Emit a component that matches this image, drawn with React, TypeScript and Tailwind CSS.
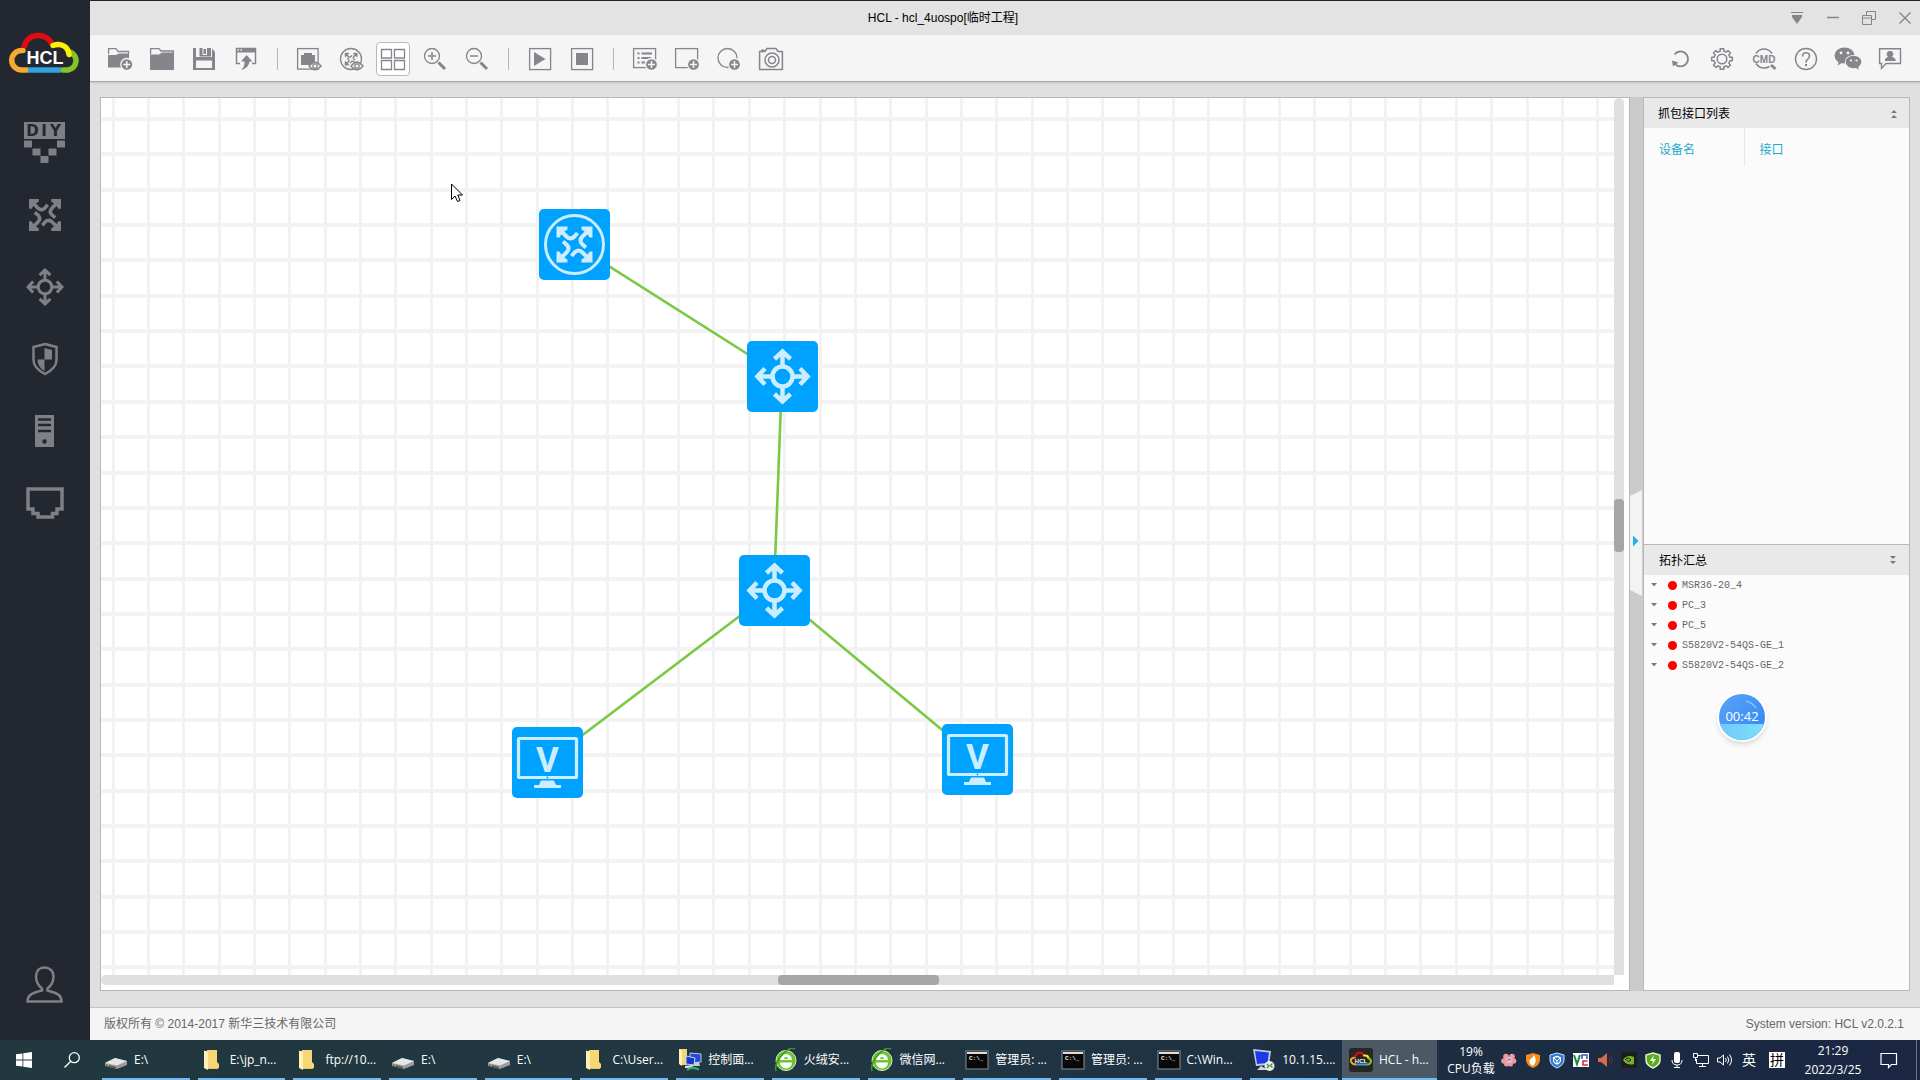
import { useState, type ReactNode } from 'react';
import clsx from 'clsx';

const GRID_STEP = 35.35;

type NodeKind = 'router' | 'switch' | 'pc';

interface Device {
  id: string;
  name: string;
  kind: NodeKind;
  x: number;
  y: number;
}

// Coordinates are relative to the top left corner of the canvas
const devices: Device[] = [
  { id: 'r4', name: 'MSR36-20_4', kind: 'router', x: 438, y: 111 },
  { id: 'pc3', name: 'PC_3', kind: 'pc', x: 411, y: 629 },
  { id: 'pc5', name: 'PC_5', kind: 'pc', x: 841, y: 626 },
  { id: 's1', name: 'S5820V2-54QS-GE_1', kind: 'switch', x: 646, y: 243 },
  { id: 's2', name: 'S5820V2-54QS-GE_2', kind: 'switch', x: 638, y: 457 },
];

const links = [
  ['r4', 's1'],
  ['s1', 's2'],
  ['s2', 'pc3'],
  ['s2', 'pc5'],
];

const center = (id: string) => {
  const d = devices.find((item) => item.id === id)!;
  return { x: d.x + 35, y: d.y + 35 };
};

/* ---------- shared glyphs ---------- */

function RouterArrows() {
  return (
    <>
      {[0, 90, 180, 270].map((angle) => (
        <g key={angle} transform={`rotate(${angle} 18 18)`}>
          <path d="M0 0H11V3L8.500 4.500 4.500 8.500 3 11H0Z" fill="currentColor" />
          <path d="M4 4 10 10Q14 14 18 10L21 6.500" fill="none" stroke="currentColor" strokeWidth="4" />
        </g>
      ))}
    </>
  );
}

function SwitchArrows() {
  return (
    <g fill="none" stroke="currentColor" strokeWidth="4.5">
      <circle cx="28" cy="28" r="10" />
      {[0, 90, 180, 270].map((angle) => (
        <path key={angle} d="M28 18V3M20 10.500 28 3 36 10.500" transform={`rotate(${angle} 28 28)`} />
      ))}
    </g>
  );
}

function NodeIcon({ kind }: { kind: NodeKind }) {
  return (
    <svg viewBox="0 0 71 71" className="size-full">
      {kind === 'router' && (
        <>
          <circle cx="35.5" cy="35.5" r="29" fill="none" stroke="currentColor" strokeWidth="3" />
          <g transform="translate(17.5 17.5)">
            <RouterArrows />
          </g>
        </>
      )}
      {kind === 'switch' && (
        <g transform="translate(7.5 7.5)">
          <SwitchArrows />
        </g>
      )}
      {kind === 'pc' && (
        <>
          <rect x="6.500" y="11.500" width="58" height="39" rx="1" fill="none" stroke="currentColor" strokeWidth="3.200" />
          <text
            x="35.500"
            y="44.500"
            textAnchor="middle"
            fontFamily="'Liberation Sans Narrow', Roboto, sans-serif"
            fontWeight="700"
            fontSize="35"
            fill="currentColor"
          >
            V
          </text>
          <circle cx="35.500" cy="50.500" r="0.900" fill="#00a2ff" />
          <path d="M29 53.500H42L44 58H49V61H22V58H27Z" fill="currentColor" />
        </>
      )}
    </svg>
  );
}

function Logo() {
  return (
    <svg viewBox="0 0 74 44" className="h-11 w-[74px]" fill="none" strokeWidth="5.5" strokeLinecap="round">
      <path d="M63 21.500A10 9.500 0 0 1 60 39H55" stroke="#86c127" />
      <path d="M15 19.500H13.500A9.750 9.750 0 0 0 13.500 39H19" stroke="#f5a92e" />
      <path d="M20 39H53" stroke="#2ea3dc" strokeLinecap="butt" />
      <path d="M16 17C18 1 39 1 44 13" stroke="#e30b13" strokeLinecap="butt" />
      <path d="M45 14.500C53 12 60 15 61 23.500" stroke="#fdf000" />
      <text x="37" y="33" textAnchor="middle" fontFamily="'Liberation Sans', Arial, sans-serif" fontWeight="700" fontSize="18" fill="#fff">
        HCL
      </text>
    </svg>
  );
}

/* ---------- sidebar icons ---------- */

const DiyIcon = () => (
  <svg viewBox="0 0 42 42" className="size-[42px]" fill="currentColor">
    <rect y="0" width="41" height="17" />
    <g textAnchor="middle" fontFamily="'DejaVu Sans', sans-serif" fontWeight="700" fontSize="15" fill="#23272f">
      <text x="8.500" y="14">
        D
      </text>
      <text x="20" y="14">
        I
      </text>
      <text x="31.500" y="14">
        Y
      </text>
    </g>
    <path d="M0 18.500h8v7H0zM33 18.500h8v7h-8zM8.500 26.500h8v7h-8zM24.500 26.500h8v7h-8zM16.500 34h8v7h-8z" />
  </svg>
);

const ShieldIcon = () => (
  <svg viewBox="0 0 28 36" className="h-9 w-7">
    <path d="M14 3 25.500 6V19Q25.500 27 14 33 2.500 27 2.500 19V6Z" fill="none" stroke="currentColor" strokeWidth="2.500" />
    <path d="M13.500 7 21 9V18.500H13.500V30Q6.500 26 6.500 18.500H13.500Z" fill="currentColor" />
  </svg>
);

const ServerIcon = () => (
  <svg viewBox="0 0 20 34" className="h-[34px] w-5">
    <path d="M0 1H19V33H0Z" fill="currentColor" />
    <path d="M3 5.500H16M3 11H16M3 17H16" stroke="#23272f" strokeWidth="2.500" />
    <circle cx="9.500" cy="27.500" r="2.200" fill="#23272f" />
  </svg>
);

const PortIcon = () => (
  <svg viewBox="0 0 40 34" className="h-[34px] w-10">
    <path d="M3 3H37V23H32V27.500H27.500V31H13V27.500H8V23H3Z" fill="none" stroke="currentColor" strokeWidth="3.500" />
  </svg>
);

const UserIcon = () => (
  <svg viewBox="0 0 38 38" className="size-[38px]" fill="none" stroke="currentColor" strokeWidth="2.500">
    <path d="M16 25.500V23.500C11.500 20 10 16 10 11.500 10 6 13.500 2.500 18.500 2.500S27.500 6 27.500 11.500C27.500 16 26 20 21.500 23.500V25.500C29 27.500 35.500 29 35.500 36.500H1.500C1.500 29 8.500 27.500 16 25.500Z" />
  </svg>
);

const sidebarItems: { label: string; icon: ReactNode }[] = [
  { label: 'DIY', icon: <DiyIcon /> },
  {
    label: '路由器',
    icon: (
      <svg viewBox="0 0 36 36" className="size-8">
        <RouterArrows />
      </svg>
    ),
  },
  {
    label: '交换机',
    icon: (
      <svg viewBox="0 0 56 56" className="size-[38px]">
        <SwitchArrows />
      </svg>
    ),
  },
  { label: '防火墙', icon: <ShieldIcon /> },
  { label: '终端', icon: <ServerIcon /> },
  { label: '连线', icon: <PortIcon /> },
];

/* ---------- toolbar icons ---------- */

function ToolSvg({ children }: { children: ReactNode }) {
  return (
    <svg viewBox="0 0 28 28" className="size-7" fill="none" stroke="currentColor" strokeWidth="1.300">
      {children}
    </svg>
  );
}

function PlusBadge({ x = 20.5, y = 19.5 }: { x?: number; y?: number }) {
  return (
    <g transform={`translate(${x} ${y})`}>
      <circle r="6" fill="currentColor" stroke="#f5f5f5" />
      <path d="M-3.500 0H3.500M0-3.500V3.500" stroke="#f5f5f5" strokeWidth="1.500" />
    </g>
  );
}

function EyeBadge() {
  return (
    <g transform="translate(20 21)">
      <path d="M-6 0Q0-7.500 6 0 0 7.500-6 0Z" fill="#f5f5f5" />
      <circle r="2.200" />
    </g>
  );
}

function Magnifier({ plus }: { plus?: boolean }) {
  return (
    <ToolSvg>
      <circle cx="11" cy="11" r="7.500" />
      <path d={plus ? 'M7 11H15M11 7V15' : 'M7 11H15'} strokeWidth="1.500" />
      <path d="M17.500 17.500 24 24" strokeWidth="3" />
    </ToolSvg>
  );
}

interface Tool {
  label: string;
  icon: ReactNode;
}

const toolGroups: Tool[][] = [
  [
    {
      label: '新建工程',
      icon: (
        <ToolSvg>
          <path d="M2.600 9V3.600H10L12 6.500H22.500V10" />
          <path d="M2 10H10L13 8.500H23V22.500H2Z" fill="currentColor" stroke="none" />
          <PlusBadge x={20.8} />
        </ToolSvg>
      ),
    },
    {
      label: '打开工程',
      icon: (
        <ToolSvg>
          <path d="M2.600 9V3.600H11L13 6H25.400V9" />
          <path d="M2 9.500H11L14 7.500H26V25H2Z" fill="currentColor" stroke="none" />
        </ToolSvg>
      ),
    },
    {
      label: '保存工程',
      icon: (
        <ToolSvg>
          <path d="M3 3H6V12H22V3.500L25 7V25H3Z" fill="currentColor" stroke="none" />
          <path d="M9.500 3H12.500V10H17V3H21V11.500H9.500Z" fill="currentColor" stroke="none" />
          <path d="M13.500 4H16V9H13.500Z" fill="currentColor" stroke="none" />
          <path d="M6 15.500H22V23H6Z" fill="#f5f5f5" stroke="none" />
        </ToolSvg>
      ),
    },
    {
      label: '导出工程',
      icon: (
        <ToolSvg>
          <path d="M8 18.500H4.500V3.500H23.500V18.500H20" strokeWidth="1.500" />
          <path d="M4 3H24V7.500H4Z" fill="currentColor" stroke="none" />
          <path d="M5.500 5H7M8.500 5H10" stroke="#f5f5f5" />
          <path d="M14.500 10 20.500 16.500H17.500Q17 23 9 25 13 22 12.500 16.500H9Z" fill="currentColor" stroke="none" />
        </ToolSvg>
      ),
    },
  ],
  [
    {
      label: '显示设备名',
      icon: (
        <ToolSvg>
          <rect x="2.600" y="3.600" width="20.500" height="20.500" />
          <path d="M6 10H9V8H17V10H20V20H6Z" fill="currentColor" stroke="none" />
          <EyeBadge />
        </ToolSvg>
      ),
    },
    {
      label: '显示接口名',
      icon: (
        <ToolSvg>
          <circle cx="14" cy="14" r="10.500" />
          <g transform="translate(8 8) scale(.34)">
            <RouterArrows />
          </g>
          <EyeBadge />
        </ToolSvg>
      ),
    },
    {
      label: '显示网格',
      icon: (
        <ToolSvg>
          <path d="M2.500 4.500H12.500V13H2.500ZM15.500 4.500H25.500V13H15.500ZM2.500 15.500H12.500V24.500H2.500ZM15.500 15.500H25.500V24.500H15.500Z" />
        </ToolSvg>
      ),
    },
    { label: '放大', icon: <Magnifier plus /> },
    { label: '缩小', icon: <Magnifier /> },
  ],
  [
    {
      label: '全部启动',
      icon: (
        <ToolSvg>
          <rect x="3.600" y="3.600" width="21" height="21" />
          <path d="M8 7 19.500 14 8 21Z" fill="currentColor" stroke="none" />
        </ToolSvg>
      ),
    },
    {
      label: '全部停止',
      icon: (
        <ToolSvg>
          <rect x="3.600" y="3.600" width="21" height="21" />
          <path d="M8 8H20V20H8Z" fill="currentColor" stroke="none" />
        </ToolSvg>
      ),
    },
  ],
  [
    {
      label: '添加文本',
      icon: (
        <ToolSvg>
          <rect x="2.600" y="3.600" width="22" height="19" />
          <path d="M6.500 8.500H8.500M10.500 8.500H21M6.500 13H8.500M10.500 13H20M6.500 17.500H8.500M10.500 17.500H14" strokeWidth="1.800" />
          <PlusBadge />
        </ToolSvg>
      ),
    },
    {
      label: '添加矩形',
      icon: (
        <ToolSvg>
          <rect x="2.600" y="3.600" width="22" height="19" />
          <PlusBadge />
        </ToolSvg>
      ),
    },
    {
      label: '添加圆形',
      icon: (
        <ToolSvg>
          <circle cx="12.500" cy="13" r="9.500" />
          <PlusBadge x={19.500} />
        </ToolSvg>
      ),
    },
    {
      label: '截图',
      icon: (
        <ToolSvg>
          <path d="M2.600 6.500H8L10 3.600H19L21 6.500H25.400V24.400H2.600Z" strokeWidth="1.500" />
          <path d="M4 5.500H7.500" strokeWidth="2" />
          <circle cx="15" cy="15" r="7" strokeWidth="1.500" />
          <circle cx="15" cy="15" r="3.500" strokeWidth="1.500" />
        </ToolSvg>
      ),
    },
  ],
];

const helpTools: Tool[] = [
  {
    label: '刷新',
    icon: (
      <ToolSvg>
        <path d="M8.500 9.500A7.500 7.500 0 1 1 9 19" strokeWidth="1.800" />
        <path d="M6 15.500 12.500 17.500 7 21.500Z" fill="currentColor" stroke="none" />
      </ToolSvg>
    ),
  },
  {
    label: '设置',
    icon: (
      <ToolSvg>
        <circle cx="14" cy="14" r="4.800" strokeWidth="1.500" />
        {/* one tooth and the rim next to it, eight times round */}
        {[0, 45, 90, 135, 180, 225, 270, 315].map((angle) => (
          <path
            key={angle}
            d="M10.900 6.500 12.200 6.200V3.700H15.800V6.200L17.100 6.500"
            transform={`rotate(${angle} 14 14)`}
            strokeWidth="1.500"
            strokeLinejoin="round"
          />
        ))}
      </ToolSvg>
    ),
  },
  {
    label: '命令行',
    icon: (
      <ToolSvg>
        <path d="M6 8.500Q9 4 14 4T22 8.500M6 18.500Q9 23 14 23 17 23 19.500 21.500" strokeWidth="1.500" />
        <text x="14" y="17.500" textAnchor="middle" fontFamily="'Liberation Sans', Arial, sans-serif" fontWeight="700" fontSize="10" fill="currentColor" stroke="none">
          CMD
        </text>
        <path d="M21 20 25.500 24" strokeWidth="3" />
      </ToolSvg>
    ),
  },
  {
    label: '帮助',
    icon: (
      <ToolSvg>
        <circle cx="14" cy="14" r="10.500" strokeWidth="1.400" />
        <path d="M10.500 11.500C10.500 6.500 17.500 6.500 17.500 11 17.500 14 14 14 14 17.500" strokeWidth="1.600" />
        <circle cx="14" cy="20" r="1.200" fill="currentColor" stroke="none" />
      </ToolSvg>
    ),
  },
  {
    label: '微信',
    icon: (
      <ToolSvg>
        <g stroke="none">
          <ellipse cx="10.500" cy="10.500" rx="10" ry="8" fill="currentColor" />
          <path d="M5 16 3.500 20.500 9.500 17Z" fill="currentColor" />
          <ellipse cx="19.500" cy="17" rx="8.800" ry="7" fill="#f5f5f5" />
          <ellipse cx="19.500" cy="17" rx="7.800" ry="6.200" fill="currentColor" />
          <path d="M21 22 24.500 25 24 20Z" fill="currentColor" />
          <g fill="#f5f5f5">
            <circle cx="7" cy="8" r="1.400" />
            <circle cx="14" cy="8" r="1.400" />
            <circle cx="17" cy="15.500" r="1.100" />
            <circle cx="22.500" cy="15.500" r="1.100" />
          </g>
        </g>
      </ToolSvg>
    ),
  },
  {
    label: '反馈',
    icon: (
      <ToolSvg>
        <path d="M3.600 3.800H24.500V18.500H10L5.500 23.500V18.500H3.600Z" strokeWidth="1.400" />
        <path d="M14 6A3 3 0 0 1 16 11.500L19.500 14V16H9V14L12 11.500A3 3 0 0 1 14 6Z" fill="currentColor" stroke="none" />
      </ToolSvg>
    ),
  },
];

function Toolbar() {
  const [showGrid, setShowGrid] = useState(true);

  return (
    <div role="toolbar" className="flex h-[47px] shrink-0 items-center border-b border-[#a9a9a9] bg-[#f5f5f5] px-[9px] pt-0.5 text-[#85868c] shadow">
      {toolGroups.map((group, i) => (
        <div key={i} className="flex items-center">
          {i > 0 && (
            <span className="flex w-[21px] justify-center">
              <span className="h-[22px] w-px bg-[#b5b5b8]" />
            </span>
          )}
          {group.map((tool) => {
            const isGrid = tool.label === '显示网格';
            return (
              <button
                key={tool.label}
                aria-label={tool.label}
                onClick={isGrid ? () => setShowGrid(!showGrid) : undefined}
                className={clsx(
                  'mx-1 flex size-[34px] items-center justify-center rounded-sm',
                  isGrid && showGrid && 'border border-[#b9b9b9] bg-white'
                )}
              >
                {tool.icon}
              </button>
            );
          })}
        </div>
      ))}
      <div className="ml-auto flex">
        {helpTools.map((tool) => (
          <button key={tool.label} aria-label={tool.label} className="mx-1 flex size-[34px] items-center justify-center">
            {tool.icon}
          </button>
        ))}
      </div>
    </div>
  );
}

function TitleBar() {
  return (
    <header className="flex h-[35px] shrink-0 items-center border-t border-[#23202a] bg-[#e3e3e3] pl-[14px]">
      <h1 className="flex-1 text-center text-xs text-black">HCL - hcl_4uospo[临时工程]</h1>
      <div className="flex gap-1.5 text-[#85868c]">
        <button aria-label="菜单" className="flex h-6 w-[30px] items-center justify-center">
          <svg viewBox="0 0 14 14" className="size-3.5">
            <path d="M1 1.500H13" stroke="currentColor" />
            <path d="M2 4H12V6L7 13 2 6Z" fill="currentColor" />
          </svg>
        </button>
        <button aria-label="最小化" className="flex h-6 w-[30px] items-center justify-center">
          <svg viewBox="0 0 14 14" className="size-3.5">
            <path d="M1 6.500H13" stroke="currentColor" strokeWidth="1.500" />
          </svg>
        </button>
        <button aria-label="还原" className="flex h-6 w-[30px] items-center justify-center">
          <svg viewBox="0 0 14 14" className="size-3.5" fill="none" stroke="currentColor">
            <path d="M4.500 4.500V.5H13.500V8.500H9.500M.5 4.500H9.500V13.500H.5ZM.5 7H9.500" />
          </svg>
        </button>
        <button aria-label="关闭" className="flex h-6 w-[30px] items-center justify-center">
          <svg viewBox="0 0 14 14" className="size-3.5">
            <path d="M1.500 1.500 12.500 12.500M12.500 1.500 1.500 12.500" stroke="currentColor" strokeWidth="1.400" />
          </svg>
        </button>
      </div>
    </header>
  );
}

function Sidebar() {
  return (
    <aside className="flex w-[90px] shrink-0 flex-col items-center bg-[#23272f] pb-[37px] pt-[31px] text-[#7e8085]">
      <Logo />
      <nav className="mt-8 flex flex-col">
        {sidebarItems.map((item) => (
          <button key={item.label} aria-label={item.label} className="flex h-[72px] w-[90px] items-center justify-center">
            {item.icon}
          </button>
        ))}
      </nav>
      <button aria-label="用户" className="mt-auto">
        <UserIcon />
      </button>
    </aside>
  );
}

function Topology() {
  return (
    <section className="flex min-w-0 flex-1 flex-col border border-[#b8b8b8] bg-white">
      <div className="flex min-h-0 flex-1">
        <div className="relative min-w-0 flex-1 overflow-hidden">
          <svg className="absolute inset-0 size-full" shapeRendering="crispEdges">
            {Array.from({ length: 72 }, (_, i) => (
              <rect key={`h${i}`} x="0" y={Math.round(19 + i * GRID_STEP)} width="100%" height="4" fill="#f3f3f3" />
            ))}
            {Array.from({ length: 110 }, (_, i) => (
              <rect key={`v${i}`} x={Math.round(10.500 + i * GRID_STEP)} y="0" width="3" height="100%" fill="#f2f2f2" />
            ))}
          </svg>
          <svg className="absolute inset-0 size-full" stroke="#7ac943" strokeWidth="2.600">
            {links.map(([from, to]) => {
              const a = center(from);
              const b = center(to);
              return <line key={from + to} x1={a.x} y1={a.y} x2={b.x} y2={b.y} />;
            })}
          </svg>
          {devices.map((d) => (
            <button
              key={d.id}
              aria-label={d.name}
              style={{ left: d.x, top: d.y }}
              className="absolute size-[71px] rounded-[5px] bg-[#00a2ff] text-[#cbeeff]"
            >
              <NodeIcon kind={d.kind} />
            </button>
          ))}
          <svg viewBox="0 0 12 20" className="absolute left-[350px] top-[85px] h-5 w-3">
            <path d="M.5 1V16.500L4 13 6.500 18.500 9 17.500 6.800 12H11.500Z" fill="#fff" stroke="#000" />
          </svg>
        </div>
        <div className="relative mr-[5px] w-2.5 rounded-t-md bg-[#e0e0e0]">
          <span className="absolute inset-x-0 top-[45.7%] h-[53px] rounded bg-[#a6a6a6]" />
        </div>
      </div>
      <div className="relative mb-[5px] mr-[15px] h-2.5 rounded-l-md bg-[#e0e0e0]">
        <span className="absolute inset-y-0 left-[45%] w-[161px] -translate-x-1 rounded bg-[#a6a6a6]" />
      </div>
    </section>
  );
}

function CollapseHandle() {
  return (
    <div className="flex w-[13px] shrink-0 items-center bg-[#cbcbcb] pb-0.5">
      <button aria-label="收起" className="w-3">
        <svg viewBox="0 0 12 106" className="h-[106px] w-3">
          <path d="M0 6 12 0V106L0 100Z" fill="#f3f3f3" />
          <path d="M3 45.500 8.500 51 3 56.500Z" fill="#1fb0e6" />
        </svg>
      </button>
    </div>
  );
}

function DoubleArrow({ down }: { down?: boolean }) {
  return (
    <svg viewBox="0 0 6 10" className="h-2.5 w-1.5" fill="#77787c">
      <path d={down ? 'M0 1H6L3 4ZM0 6H6L3 9Z' : 'M0 4H6L3 1ZM0 9H6L3 6Z'} />
    </svg>
  );
}

function RightPanel() {
  return (
    <aside className="relative flex w-[267px] shrink-0 flex-col border border-[#b8b8b8] bg-[#fbfbfb]">
      <div className="flex flex-1 flex-col">
        <div className="flex h-[30px] items-center justify-between bg-[#e9e9e9] pl-3.5 pr-3 pt-0.5">
          <h2 className="text-xs text-black">抓包接口列表</h2>
          <button aria-label="收起列表">
            <DoubleArrow />
          </button>
        </div>
        <table className="w-full table-fixed text-left text-xs text-[#1fa9cc]">
          <thead>
            <tr className="h-[38px]">
              <th className="w-[100px] border-r border-[#e6e6e6] pl-[15px] pt-1.5 font-normal">设备名</th>
              <th className="pl-[15px] pt-1.5 font-normal">接口</th>
            </tr>
          </thead>
        </table>
      </div>
      <div className="flex h-[446px] flex-col border-t border-[#b8b8b8]">
        <div className="flex h-[30px] items-center justify-between bg-[#e9e9e9] pl-[15px] pr-[13px]">
          <h2 className="pt-0.5 text-xs text-black">拓扑汇总</h2>
          <button aria-label="展开列表">
            <DoubleArrow down />
          </button>
        </div>
        <ul>
          {devices.map((d) => (
            <li key={d.id} className="flex h-5 items-center pl-[7px] font-['Liberation_Mono',monospace] text-[10px] text-[#666]">
              <svg viewBox="0 0 6 4" className="h-1 w-1.5">
                <path d="M0 0H6L3 3.500Z" fill="#77787c" />
              </svg>
              <span className="ml-[11px] mr-[5px] size-[9px] rounded-full bg-[#fa0000]" />
              {d.name}
            </li>
          ))}
        </ul>
      </div>
      <div className="absolute bottom-[248px] left-[73px] flex size-[50px] items-center justify-center overflow-hidden rounded-full border-2 border-white bg-linear-to-br from-[#5aa5f8] to-[#2f83f4] shadow-md">
        <span className="absolute inset-x-0 bottom-0 h-4 bg-linear-to-r from-[#6fc9fb] to-[#7fe0fb]" />
        <svg viewBox="0 0 46 46" className="absolute inset-0 size-full" fill="none" stroke="#a5cdfc" strokeWidth="1.200">
          <path d="M27 7Q34 9 37 14" />
        </svg>
        <span className="relative font-['Open_Sans',sans-serif] text-[13px] text-white">00:42</span>
      </div>
    </aside>
  );
}

/* ---------- taskbar ---------- */

const DriveIcon = () => (
  <svg viewBox="0 0 22 22" className="size-[22px]">
    <path d="M0 14 10 9 22 12V16L12 20 0 17Z" fill="#9b9b9b" />
    <path d="M0 14 10 9 22 12 12 16.500Z" fill="#e6e6e6" />
    <path d="M1 15.500 11 18V19.500L1 17Z" fill="#4d5052" />
    <circle cx="3" cy="16.500" r=".8" fill="#6ad94a" />
  </svg>
);

const FolderIcon = () => (
  <svg viewBox="0 0 22 22" className="size-[22px]">
    <path d="M3 2H13L14 13 17 15V20H6Z" fill="#edc458" />
    <path d="M6 1H16V13L18 15V19H6Z" fill="#f6d675" />
    <path d="M3 1.500 7 3V21L3 19Z" fill="#fff0b5" />
  </svg>
);

const ControlIcon = () => (
  <svg viewBox="0 0 24 24" className="size-6">
    <path d="M1 1H9V17H3L1 15Z" fill="#f1d57d" />
    <path d="M1 1 4 3V18L1 16Z" fill="#fff0b5" />
    <path d="M12 5 23 6V14L12 15Z" fill="#2549d8" stroke="#b8c8e5" />
    <path d="M14 15 21 14 22 18 14 18Z" fill="#c9cdd4" />
    <path d="M8 8 17 10 16 17 8 16Z" fill="#1237d2" stroke="#c9d4e8" />
    <path d="M7 18 14 17 15 20H7Z" fill="#dcdfe4" />
    <path d="M9 22Q14 18 21 21.500" stroke="#29b36a" strokeWidth="2" fill="none" />
  </svg>
);

const BrowserIcon = () => (
  <svg viewBox="0 0 24 24" className="size-6">
    <circle cx="12" cy="12.500" r="10" fill="#6cc52c" stroke="#d9f2c6" />
    <path d="M6 12A6 6 0 0 1 18 12ZM6 14.500H18A6 6 0 0 1 6 14.500Z" fill="#fff" />
    <path d="M10 11A2 2 0 0 1 14 11Z" fill="#6cc52c" />
    <path d="M2 23Q0 16 8 7T21 1" stroke="#3a9c1d" strokeWidth="1.500" fill="none" />
  </svg>
);

const ConsoleIcon = () => (
  <svg viewBox="0 0 24 24" className="size-6">
    <rect x="1" y="3" width="22" height="18" fill="#080808" stroke="#8f8f8f" />
    <path d="M2 4H22V6H2Z" fill="#dedede" />
    <text x="4" y="12" fontFamily="'Liberation Mono', monospace" fontWeight="700" fontSize="6" fill="#eee">
      C:\_
    </text>
  </svg>
);

const RemoteIcon = () => (
  <svg viewBox="0 0 24 24" className="size-6">
    <path d="M1 1 19 3 17 17 4 18Z" fill="#c5cede" />
    <path d="M3 3 17 4.500 15.500 15 5 16Z" fill="#1b3be6" />
    <path d="M9 18 5 22H16Z" fill="#d8d8d8" />
    <circle cx="17.500" cy="18" r="5" fill="#ececec" />
    <path d="M15 16 17 18 15 20M20.500 15.500 18.500 17.500 20.500 19.500" stroke="#2a9a35" strokeWidth="1.300" fill="none" />
  </svg>
);

const HclIcon = () => (
  <svg viewBox="0 0 24 24" className="size-6" fill="none" strokeWidth="2" strokeLinecap="round">
    <rect width="24" height="24" rx="3" fill="#262626" />
    <path d="M6 9.500Q1 10 2 13.500 3 16.500 7 16.500" stroke="#f5a92e" />
    <path d="M6 8.500Q8 4 12 5 14 5.500 15 7.500" stroke="#e30b13" />
    <path d="M15 7.500Q19 7 19.500 10" stroke="#fdf000" />
    <path d="M20 10.500Q23 12 21.500 15 20.500 16.500 18 16.500" stroke="#86c127" />
    <path d="M8 16.500H17" stroke="#2ea3dc" />
    <text x="12" y="14.500" textAnchor="middle" fontFamily="'Liberation Sans', sans-serif" fontWeight="700" fontSize="6" fill="#fff">
      HCL
    </text>
  </svg>
);

const tasks: { title: string; icon: ReactNode }[] = [
  { title: 'E:\\', icon: <DriveIcon /> },
  { title: 'E:\\jp_n...', icon: <FolderIcon /> },
  { title: 'ftp://10...', icon: <FolderIcon /> },
  { title: 'E:\\', icon: <DriveIcon /> },
  { title: 'E:\\', icon: <DriveIcon /> },
  { title: 'C:\\User...', icon: <FolderIcon /> },
  { title: '控制面...', icon: <ControlIcon /> },
  { title: '火绒安...', icon: <BrowserIcon /> },
  { title: '微信网...', icon: <BrowserIcon /> },
  { title: '管理员: ...', icon: <ConsoleIcon /> },
  { title: '管理员: ...', icon: <ConsoleIcon /> },
  { title: 'C:\\Win...', icon: <ConsoleIcon /> },
  { title: '10.1.15....', icon: <RemoteIcon /> },
];

const shield = 'M8 1 15 3V8Q15 13 8 16 1 13 1 8V3Z';

const trayIcons: { label: string; icon: ReactNode }[] = [
  {
    label: '花瓣',
    icon: (
      <g fill="#f09a9c">
        <circle cx="5" cy="4.500" r="2.800" />
        <circle cx="11" cy="4.500" r="2.800" />
        <circle cx="12.500" cy="9" r="2.800" />
        <circle cx="9.500" cy="12" r="2.500" />
        <circle cx="5.500" cy="12" r="2.500" />
        <circle cx="3" cy="9" r="2.800" />
        <circle cx="8" cy="8" r="3" fill="#c9c9e8" />
        <path d="M6 9 8 7 10 8" stroke="#c8454e" fill="none" />
      </g>
    ),
  },
  {
    label: '火绒',
    icon: (
      <>
        <path d={shield} fill="#f28c1c" />
        <path d="M8 14Q3 12 5 7 7 7 9 3 13 9 8 14Z" fill="#fff" />
      </>
    ),
  },
  {
    label: '管家',
    icon: (
      <>
        <path d={shield} fill="#2a7bd1" stroke="#cfe5fa" />
        <circle cx="8" cy="8" r="3.500" fill="none" stroke="#fff" strokeWidth="1.300" />
        <path d="M4 5 8 9 12 5M8 9V13" stroke="#fff" fill="none" />
      </>
    ),
  },
  {
    label: 'VNC',
    icon: (
      <>
        <rect y="1" width="16" height="14" fill="#fff" />
        <path d="M1 3 4 12 7 3" stroke="#1c8a37" strokeWidth="2" fill="none" />
        <path d="M9 7V3H14V7" stroke="#2c5fc9" strokeWidth="1.600" fill="none" />
        <path d="M14.500 9H10V13H15" stroke="#d3313a" strokeWidth="1.600" fill="none" />
      </>
    ),
  },
  {
    label: '音频',
    icon: (
      <>
        <path d="M1 6H4L10 1V15L4 10H1Z" fill="#d8694a" />
        <path d="M12 5Q14 8 12 11M14 3Q17 8 14 13" stroke="#633" fill="none" />
      </>
    ),
  },
  {
    label: 'NVIDIA',
    icon: (
      <>
        <rect width="16" height="16" fill="#1c1f1c" />
        <path d="M2 8Q6 2 13 5V12Q6 14 2 8Z" fill="#77b32a" />
        <path d="M4 8Q7 4 10 8 7 11 5.500 8" stroke="#1c1f1c" fill="none" />
      </>
    ),
  },
  {
    label: '卫士',
    icon: (
      <>
        <path d={shield} fill="#59ad1c" stroke="#e5efc8" strokeWidth="1.500" />
        <path d="M9 3 5 9H8L7 13 11 7H8Z" fill="#fff" />
      </>
    ),
  },
  {
    label: '麦克风',
    icon: (
      <>
        <rect x="5" y="0" width="6" height="11" rx="2" fill="#fff" />
        <path d="M3 8Q3 13 8 13T13 8M8 13V15.500M5 15.500H11" stroke="#fff" fill="none" />
      </>
    ),
  },
  {
    label: '网络',
    icon: <path d="M4 3.500H15.500V11.500H3.500V7M9.500 11.500V14.500M6 14.500H13M.5 1.500H4.500V5.500H.5ZM2.500 5.500V9" stroke="#fff" fill="none" />,
  },
  {
    label: '音量',
    icon: <path d="M.5 6H3L6.500 3V13L3 10H.5ZM8.500 6Q10 8 8.500 10M10.500 4.500Q13 8 10.500 11.500M12.500 2.500Q16.500 8 12.500 13.500" stroke="#fff" fill="none" />,
  },
];

function Taskbar() {
  return (
    <footer className="flex h-10 shrink-0 bg-linear-to-r from-[#22383f] via-[#203643] to-[#1a2642] font-['Open_Sans','Noto_Sans_CJK_SC',sans-serif] text-xs text-white">
      <button aria-label="开始" className="flex w-12 items-center justify-center">
        <svg viewBox="0 0 16 16" className="size-4" fill="#fff">
          <path d="M0 2.300 6.500 1.400V7.600H0ZM7.300 1.300 16 0V7.600H7.300ZM0 8.400H6.500V14.600L0 13.700ZM7.300 8.400H16V16L7.300 14.700Z" />
        </svg>
      </button>
      <button aria-label="搜索" className="mr-0.5 flex w-12 items-center justify-center">
        <svg viewBox="0 0 16 16" className="size-4" fill="none" stroke="#fff" strokeWidth="1.300">
          <circle cx="10.300" cy="5.700" r="5" />
          <path d="M6.800 9.200.5 15.500" />
        </svg>
      </button>
      <div className="flex min-w-0 flex-1">
        {tasks.map((task, i) => (
          <div key={i} className="min-w-0 flex-1 px-1">
            <button className="flex h-10 w-full items-center gap-1.5 whitespace-nowrap border-b-2 border-[#76b9ed] pl-0.5 pt-0.5 text-left">
              <span className="flex w-6 shrink-0 justify-center">{task.icon}</span>
              {task.title}
            </button>
          </div>
        ))}
      </div>
      <button className="flex h-10 w-[95px] items-center gap-1.5 whitespace-nowrap border-b-2 border-[#76b9ed] bg-[#4a5964] pl-[7px] pt-0.5 text-left">
        <HclIcon />
        HCL - h...
      </button>
      <div className="flex w-[483px] shrink-0 items-center">
        <p className="w-[60px] pl-2 text-center leading-[17px]">
          19%
          <br />
          CPU负载
        </p>
        {trayIcons.map((t) => (
          <button key={t.label} aria-label={t.label} className="flex w-6 justify-center">
            <svg viewBox="0 0 16 16" className="size-4 overflow-visible">
              {t.icon}
            </svg>
          </button>
        ))}
        <button className="w-6 text-center text-sm leading-4">英</button>
        <button className="ml-2 size-4 bg-white text-center text-sm leading-4 text-black">拼</button>
        <p className="ml-1.5 w-[84px] text-center leading-[19px]">
          21:29
          <br />
          2022/3/25
        </p>
        <button aria-label="通知" className="flex w-7 justify-center">
          <svg viewBox="0 0 18 18" className="size-[18px]">
            <path d="M1 2.500H16.500V13.500H11.500L8.500 16.500V13.500H1Z" fill="none" stroke="#fff" strokeWidth="1.200" />
          </svg>
        </button>
        <span className="ml-auto mr-[3px] h-10 w-px bg-[#68748a]" />
      </div>
    </footer>
  );
}

export default function App() {
  return (
    <div className="flex h-screen flex-col overflow-hidden font-['Liberation_Sans','Noto_Sans_CJK_SC',sans-serif]">
      <div className="flex min-h-0 flex-1">
        <Sidebar />
        <div className="flex min-w-0 flex-1 flex-col bg-[#e0e0e0]">
          <TitleBar />
          <Toolbar />
          <main className="flex min-h-0 flex-1 px-2.5 pb-4 pt-[15px]">
            <Topology />
            <CollapseHandle />
            <RightPanel />
          </main>
          <div className="flex h-[33px] shrink-0 items-center justify-between border-t border-[#c4c4c4] bg-[#f5f5f5] pl-3.5 pr-4 text-xs text-[#666]">
            <p>版权所有 © 2014-2017 新华三技术有限公司</p>
            <p>System version: HCL v2.0.2.1</p>
          </div>
        </div>
      </div>
      <Taskbar />
    </div>
  );
}
